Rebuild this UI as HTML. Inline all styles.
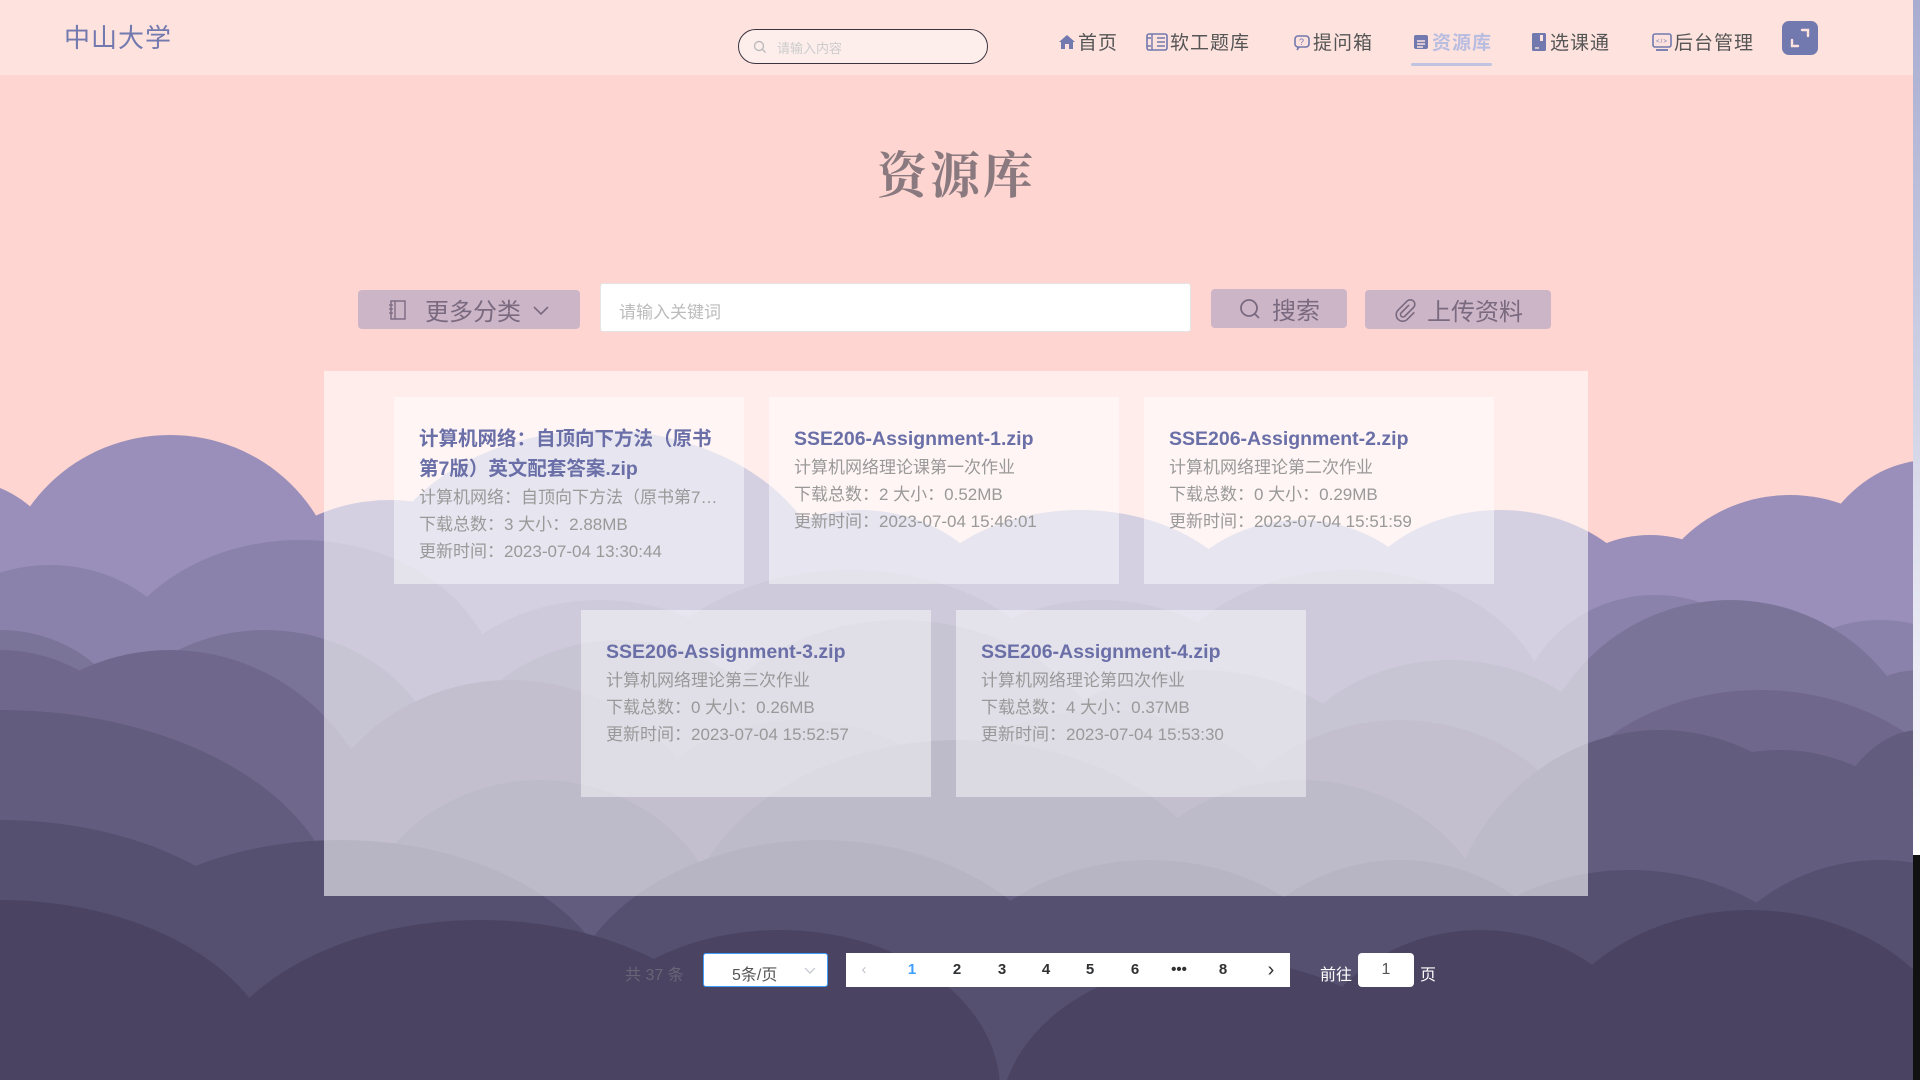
<!DOCTYPE html>
<html style="overflow:hidden;width:1920px;height:1080px"><head><meta charset="utf-8"><style>
*{margin:0;padding:0;box-sizing:border-box}
body{width:1920px;height:1080px;overflow:hidden;position:relative;background:#fed5d0;font-family:"Liberation Sans","Noto Sans CJK SC",sans-serif}
.abs{position:absolute}
#hdr{left:0;top:0;width:1913px;height:75px;background:#fde2de}
.logo{left:64px;top:18px;font-size:26px;color:#7179ae;letter-spacing:1px}
.sbox{left:738px;top:29px;width:250px;height:35px;border:1.5px solid #3a3440;border-radius:18px;background:#fdeeec}
.sbox span{position:absolute;left:38px;top:8px;font-size:13px;color:#ccc}
.nav{top:28px;font-size:19px;color:#555;letter-spacing:1px;display:flex;align-items:center;gap:2px;white-space:nowrap}
.nav svg{flex:none}
.title{left:0;width:1913px;top:136px;text-align:center;font-size:50px;font-weight:bold;color:#8a7a80;font-family:"Noto Serif CJK SC",serif;letter-spacing:3px}
.btn{background:#cdb5c8;border-radius:4px;color:#7a6a80;font-size:24px;display:flex;align-items:center;justify-content:center;gap:10px}
.panel{left:324px;top:371px;width:1264px;height:525px;background:rgba(255,255,255,.58)}
.card{width:350px;height:187px;background:rgba(255,255,255,.45);padding:27px 25px 0 25px}
.card h3{font-size:19.5px;color:#6a6fa8;line-height:30px;font-weight:bold}
.card p{font-size:17px;color:#999;line-height:27px;white-space:nowrap;overflow:hidden;text-overflow:ellipsis}
.pg{top:953px;height:34px;background:#fff}
.pn{position:absolute;top:0;line-height:34px;font-size:15px;font-weight:bold;color:#303133;width:30px;text-align:center}
</style></head><body>
<svg class="abs" style="left:0;top:0;overflow:hidden" width="1920" height="1080">
<g fill="#998fba"><ellipse cx="170" cy="600" rx="170" ry="165"/><ellipse cx="-40" cy="620" rx="120" ry="140"/><ellipse cx="390" cy="620" rx="150" ry="120"/><ellipse cx="600" cy="600" rx="230" ry="170"/><ellipse cx="860" cy="640" rx="150" ry="130"/><ellipse cx="1080" cy="640" rx="180" ry="130"/><ellipse cx="1300" cy="660" rx="150" ry="140"/><ellipse cx="1500" cy="640" rx="160" ry="130"/><ellipse cx="1650" cy="655" rx="120" ry="120"/><ellipse cx="1790" cy="640" rx="150" ry="145"/><ellipse cx="1930" cy="620" rx="130" ry="160"/><rect x="0" y="640" width="1920" height="440"/></g>
<g fill="#8a82aa"><ellipse cx="50" cy="700" rx="150" ry="135"/><ellipse cx="300" cy="700" rx="200" ry="160"/><ellipse cx="600" cy="740" rx="180" ry="140"/><ellipse cx="850" cy="720" rx="220" ry="150"/><ellipse cx="1100" cy="740" rx="180" ry="140"/><ellipse cx="1350" cy="720" rx="200" ry="150"/><ellipse cx="1655" cy="730" rx="140" ry="135"/><ellipse cx="1880" cy="740" rx="130" ry="120"/><rect x="0" y="730" width="1920" height="350"/></g>
<g fill="#7b7499"><ellipse cx="0" cy="760" rx="140" ry="130"/><ellipse cx="265" cy="800" rx="185" ry="170"/><ellipse cx="620" cy="820" rx="190" ry="180"/><ellipse cx="900" cy="800" rx="220" ry="180"/><ellipse cx="1200" cy="830" rx="200" ry="160"/><ellipse cx="1450" cy="810" rx="180" ry="150"/><ellipse cx="1730" cy="800" rx="200" ry="200"/><ellipse cx="1920" cy="820" rx="120" ry="150"/><rect x="0" y="810" width="1920" height="270"/></g>
<g fill="#70688c"><ellipse cx="0" cy="850" rx="180" ry="200"/><ellipse cx="170" cy="880" rx="220" ry="230"/><ellipse cx="510" cy="880" rx="210" ry="200"/><ellipse cx="800" cy="900" rx="200" ry="180"/><ellipse cx="1100" cy="900" rx="220" ry="190"/><ellipse cx="1400" cy="900" rx="200" ry="180"/><ellipse cx="1760" cy="880" rx="230" ry="190"/><ellipse cx="1865" cy="860" rx="90" ry="140"/><rect x="0" y="880" width="1920" height="200"/></g>
<g fill="#625c7e"><ellipse cx="0" cy="920" rx="340" ry="210"/><ellipse cx="540" cy="960" rx="190" ry="180"/><ellipse cx="960" cy="950" rx="280" ry="210"/><ellipse cx="1300" cy="960" rx="200" ry="180"/><ellipse cx="1660" cy="970" rx="220" ry="240"/><ellipse cx="1780" cy="970" rx="200" ry="220"/><ellipse cx="1920" cy="960" rx="120" ry="230"/><rect x="0" y="960" width="1920" height="120"/></g>
<g fill="#555070"><ellipse cx="0" cy="1010" rx="300" ry="190"/><ellipse cx="340" cy="1020" rx="280" ry="180"/><ellipse cx="820" cy="1030" rx="260" ry="190"/><ellipse cx="1150" cy="1040" rx="220" ry="180"/><ellipse cx="1400" cy="1060" rx="200" ry="200"/><ellipse cx="1630" cy="1050" rx="220" ry="180"/><ellipse cx="1880" cy="1060" rx="200" ry="200"/><rect x="0" y="1030" width="1920" height="50"/></g>
<g fill="#4a4462"><ellipse cx="0" cy="1080" rx="280" ry="180"/><ellipse cx="480" cy="1100" rx="280" ry="180"/><ellipse cx="780" cy="1090" rx="220" ry="160"/><ellipse cx="1220" cy="1120" rx="220" ry="160"/><ellipse cx="1480" cy="1090" rx="180" ry="160"/><ellipse cx="1750" cy="1090" rx="220" ry="180"/></g>
</svg>
<div id="hdr" class="abs"></div>
<div class="abs" style="left:1913px;top:0;width:7px;height:855px;background:linear-gradient(#a8acd0,#fff)"></div>
<div class="abs" style="left:1913px;top:855px;width:7px;height:225px;background:#111"></div>
<div class="abs logo">中山大学</div>
<div class="abs sbox"><svg class="abs" style="left:14px;top:10px" width="14" height="14" viewBox="0 0 14 14"><circle cx="6" cy="6" r="4.5" fill="none" stroke="#bbb" stroke-width="1.4"/><path d="M9.5 9.5L12.5 12.5" stroke="#bbb" stroke-width="1.4"/></svg><span>请输入内容</span></div>
<div class="abs nav" style="left:1058px"><svg width="18" height="18" viewBox="0 0 18 18"><path d="M1 9L9 2l8 7h-2v7h-4v-5H7v5H3V9z" fill="#7179ae"/></svg>首页</div>
<div class="abs nav" style="left:1146px"><svg width="22" height="20" viewBox="0 0 22 20"><rect x="1" y="2" width="20" height="16" rx="2" fill="none" stroke="#7179ae" stroke-width="1.6"/><path d="M6 2v16M11 6h8M11 10h8M11 14h8M1 6h4M1 14h4" stroke="#7179ae" stroke-width="1.4"/></svg>软工题库</div>
<div class="abs nav" style="left:1293px"><svg width="18" height="18" viewBox="0 0 18 18"><rect x="2" y="3" width="14" height="11" rx="3" fill="none" stroke="#7179ae" stroke-width="1.6"/><path d="M6 14l-2 3" stroke="#7179ae" stroke-width="1.6"/><text x="9" y="12" font-size="9" text-anchor="middle" fill="#7179ae">?</text></svg>提问箱</div>
<div class="abs nav" style="left:1412px;color:#b9bde0;font-weight:bold"><svg width="18" height="18" viewBox="0 0 18 18"><rect x="2" y="2" width="14" height="14" rx="2" fill="#7179ae"/><path d="M5 8h8M5 11h8M5 14h6" stroke="#fde2de" stroke-width="1.4"/></svg>资源库</div>
<div class="abs" style="left:1411px;top:63px;width:81px;height:3px;background:#c0c4e0;border-radius:2px"></div>
<div class="abs nav" style="left:1530px"><svg width="18" height="20" viewBox="0 0 18 20"><rect x="2" y="1" width="14" height="18" rx="1.5" fill="#7179ae"/><rect x="10" y="3" width="3" height="6" fill="#fde2de"/><path d="M5 16h4" stroke="#fde2de" stroke-width="1.4"/></svg>选课通</div>
<div class="abs nav" style="left:1652px"><svg width="20" height="20" viewBox="0 0 20 20"><rect x="1" y="2" width="18" height="13" rx="2" fill="none" stroke="#7179ae" stroke-width="1.6"/><path d="M4 18h12" stroke="#7179ae" stroke-width="1.8"/><text x="10" y="11" font-size="6" text-anchor="middle" fill="#7179ae">&lt;/&gt;</text></svg>后台管理</div>
<div class="abs" style="left:1782px;top:21px;width:36px;height:34px;border-radius:7px;background:#7179ae"><svg width="36" height="34" viewBox="0 0 36 34"><path d="M20 9h6v6M16 25h-6v-6" fill="none" stroke="#fde2de" stroke-width="2.4" stroke-linecap="round"/></svg></div>

<div class="abs title">资源库</div>

<div class="abs btn" style="left:358px;top:290px;width:222px;height:39px"><svg width="22" height="22" viewBox="0 0 22 22"><rect x="4" y="2" width="14" height="18" fill="none" stroke="#7a6a80" stroke-width="1.4"/><path d="M8 2v18M2 6h4M2 10h4M2 14h4" stroke="#7a6a80" stroke-width="1.3"/></svg><span style="margin-left:6px">更多分类</span><svg width="20" height="14" viewBox="0 0 20 14"><path d="M3 4l7 7 7-7" fill="none" stroke="#7a6a80" stroke-width="1.6"/></svg></div>
<div class="abs" style="left:600px;top:283px;width:591px;height:49px;background:#fff;border-radius:3px;border:1px solid #e4e4e4"><span style="position:absolute;left:18px;top:14px;font-size:17px;color:#bbb">请输入关键词</span></div>
<div class="abs btn" style="left:1211px;top:289px;width:136px;height:39px"><svg width="24" height="24" viewBox="0 0 24 24"><circle cx="11" cy="11" r="8" fill="none" stroke="#7a6a80" stroke-width="1.8"/><path d="M17 17l4 4" stroke="#7a6a80" stroke-width="1.8"/></svg>搜索</div>
<div class="abs btn" style="left:1365px;top:290px;width:186px;height:39px"><svg width="24" height="24" viewBox="0 0 24 24"><path d="M16 7l-8 8a2.5 2.5 0 0 0 3.5 3.5l9-9a4.5 4.5 0 0 0-6.4-6.4l-9 9a6.5 6.5 0 0 0 9.2 9.2l7-7" fill="none" stroke="#7a6a80" stroke-width="1.6"/></svg>上传资料</div>

<div class="abs panel"></div>
<div class="abs card" style="left:394px;top:397px"><h3>计算机网络：自顶向下方法（原书第7版）英文配套答案.zip</h3><p>计算机网络：自顶向下方法（原书第7版）英文配套答案</p><p>下载总数：3 大小：2.88MB</p><p>更新时间：2023-07-04 13:30:44</p></div>
<div class="abs card" style="left:769px;top:397px"><h3>SSE206-Assignment-1.zip</h3><p>计算机网络理论课第一次作业</p><p>下载总数：2 大小：0.52MB</p><p>更新时间：2023-07-04 15:46:01</p></div>
<div class="abs card" style="left:1144px;top:397px"><h3>SSE206-Assignment-2.zip</h3><p>计算机网络理论第二次作业</p><p>下载总数：0 大小：0.29MB</p><p>更新时间：2023-07-04 15:51:59</p></div>
<div class="abs card" style="left:581px;top:610px"><h3>SSE206-Assignment-3.zip</h3><p>计算机网络理论第三次作业</p><p>下载总数：0 大小：0.26MB</p><p>更新时间：2023-07-04 15:52:57</p></div>
<div class="abs card" style="left:956px;top:610px"><h3>SSE206-Assignment-4.zip</h3><p>计算机网络理论第四次作业</p><p>下载总数：4 大小：0.37MB</p><p>更新时间：2023-07-04 15:53:30</p></div>

<div class="abs" style="left:625px;top:961px;font-size:16px;color:#6a6478">共 37 条</div>
<div class="abs" style="left:703px;top:953px;width:125px;height:34px;background:#fff;border:1px solid #409eff;border-radius:3px"><span style="position:absolute;left:28px;top:7px;font-size:16px;color:#555">5条/页</span><svg class="abs" style="left:100px;top:12px" width="12" height="10" viewBox="0 0 12 10"><path d="M1 2l5 5 5-5" fill="none" stroke="#c0c4cc" stroke-width="1.2"/></svg></div>
<div class="abs pg" style="left:846px;width:444px">
<span class="pn" style="left:3px;color:#c0c4cc;font-weight:normal">‹</span>
<span class="pn" style="left:51px;color:#409eff">1</span>
<span class="pn" style="left:96px">2</span>
<span class="pn" style="left:141px">3</span>
<span class="pn" style="left:185px">4</span>
<span class="pn" style="left:229px">5</span>
<span class="pn" style="left:274px">6</span>
<span class="pn" style="left:318px">•••</span>
<span class="pn" style="left:362px">8</span>
<span class="pn" style="left:410px;font-weight:normal;font-size:20px">›</span>
</div>
<div class="abs" style="left:1320px;top:961px;font-size:16px;color:#fff">前往</div>
<div class="abs" style="left:1358px;top:953px;width:56px;height:34px;background:#fff;border-radius:4px;text-align:center;line-height:34px;font-size:16px;color:#555">1</div>
<div class="abs" style="left:1420px;top:961px;font-size:16px;color:#fff">页</div>
</body></html>
